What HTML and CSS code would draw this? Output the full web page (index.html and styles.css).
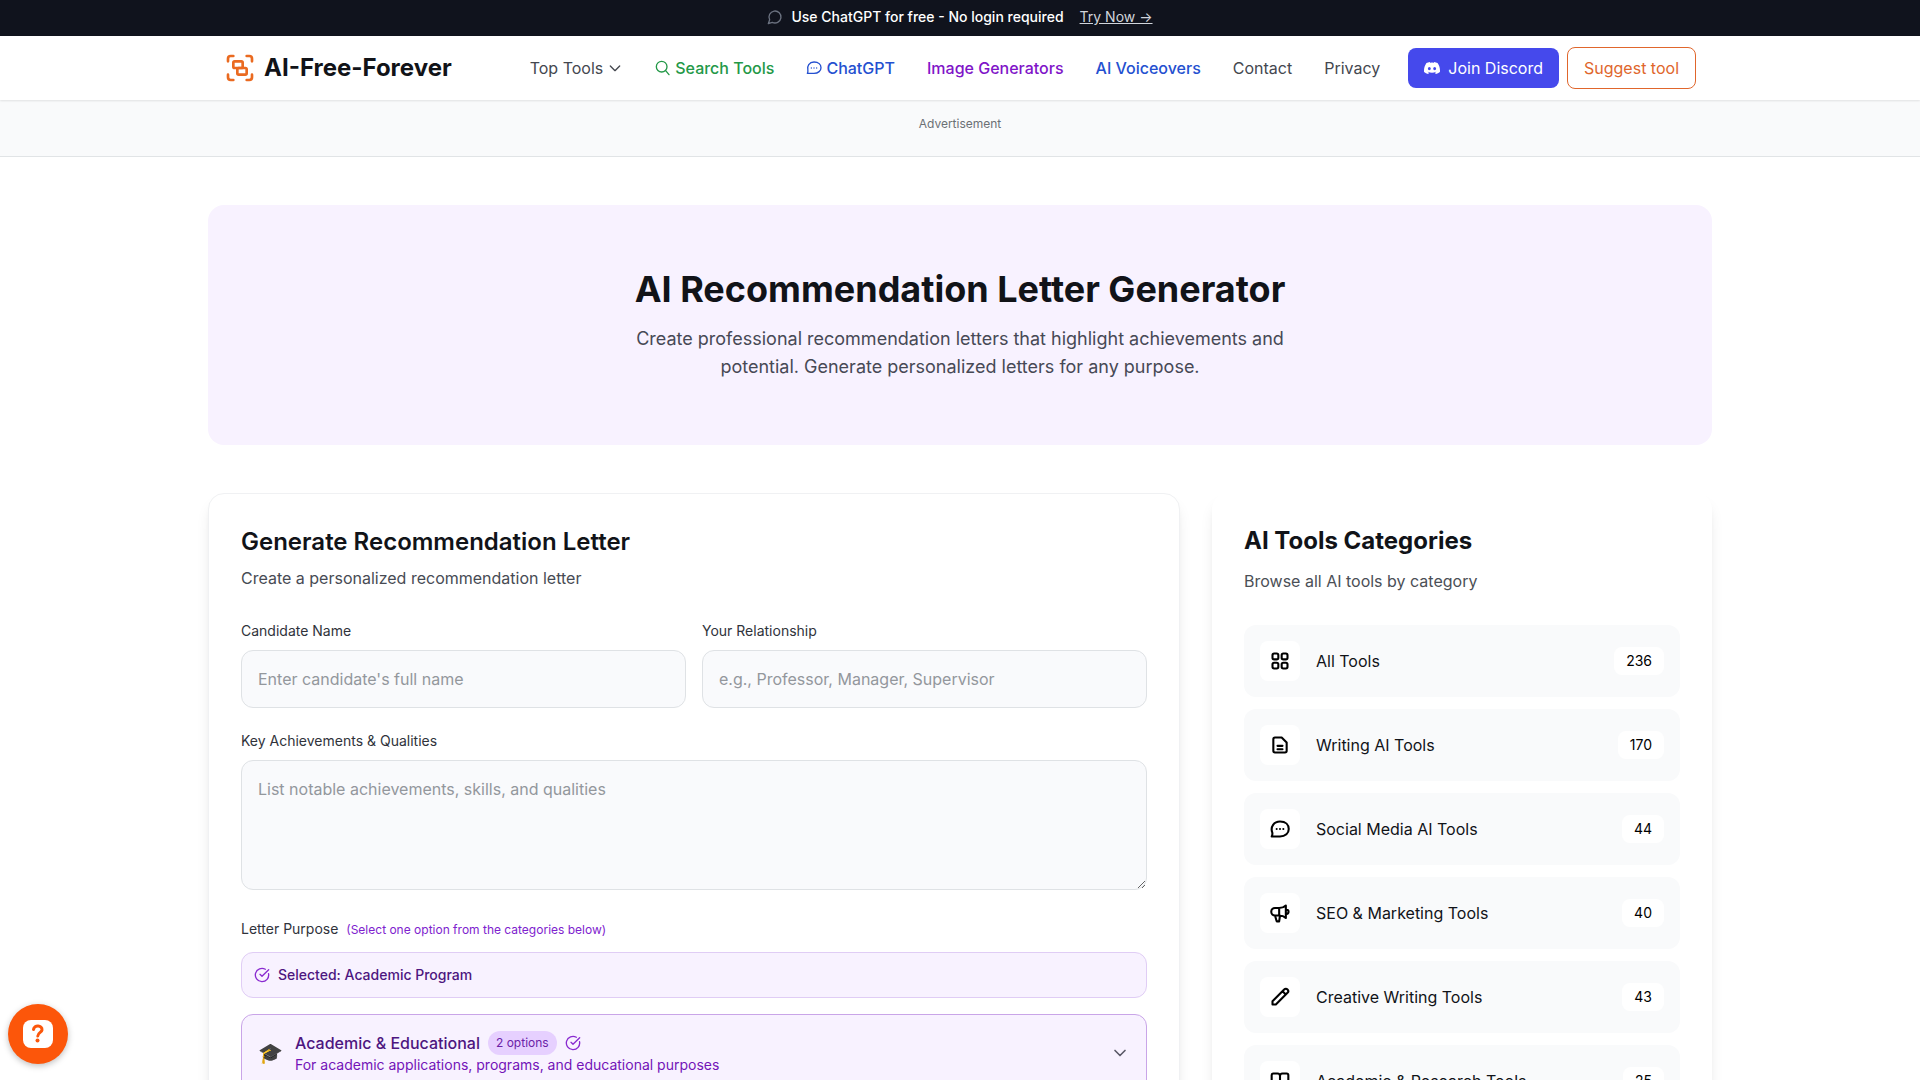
FILE: index.html
```html
<!DOCTYPE html>
<html lang="en">
    <head>
        <meta charset="utf-8">
        <meta name="viewport" content="width=device-width, initial-scale=1">
        <title>AI Recommendation Letter Generator</title>
        <link rel="stylesheet" href="styles.css">
    </head>
    <body>
        <div class="topbar">
            <svg class="icon-sm" viewBox="0 0 24 24"><path d="M7.9 20A9 9 0 1 0 4 16.1L2 22Z"/></svg>
            <span>Use ChatGPT for free - No login required</span>
            <a href="#">Try Now →</a>
        </div>

        <header class="header">
            <div class="header-inner">
                <a class="brand" href="#">
                    <svg viewBox="0 0 24 24">
                        <path d="M3 7V5a2 2 0 0 1 2-2h2M17 3h2a2 2 0 0 1 2 2v2M21 17v2a2 2 0 0 1-2 2h-2M7 21H5a2 2 0 0 1-2-2v-2"/>
                        <rect width="7" height="5" x="7" y="7" rx="1"/>
                        <rect width="7" height="5" x="10" y="12" rx="1"/>
                    </svg>
                    AI-Free-Forever
                </a>
                <nav class="nav">
                    <button class="nav-menu" type="button">Top Tools
                        <svg class="icon-sm" viewBox="0 0 24 24"><path d="m5 9 7 7 7-7"/></svg>
                    </button>
                    <a class="green" href="#">
                        <svg class="icon-sm" viewBox="0 0 24 24"><circle cx="10" cy="10" r="8"/><path d="m21 22-5-6"/></svg>
                        Search Tools
                    </a>
                    <a class="blue" href="#">
                        <svg class="icon-sm" viewBox="0 0 24 24"><path d="M2 20c1-1.500 1-3 .8-4.500C1 9 5 3 12 3s10.500 4 10.500 8.500-4 8.500-10.500 8.500zM8 12h.01M12 12h.01M16 12h.01"/></svg>
                        ChatGPT
                    </a>
                    <a class="purple" href="#">Image Generators</a>
                    <a class="blue" href="#">AI Voiceovers</a>
                    <a href="#">Contact</a>
                    <a href="#">Privacy</a>
                </nav>
                <div class="actions">
                    <a class="btn btn-discord" href="#">
                        <svg viewBox="0 0 24 24"><path d="M20.317 4.37a19.8 19.8 0 0 0-4.885-1.515.07.07 0 0 0-.079.037c-.21.375-.444.864-.608 1.25a18.3 18.3 0 0 0-5.487 0 12.6 12.6 0 0 0-.617-1.25.08.08 0 0 0-.079-.037A19.7 19.7 0 0 0 3.677 4.37C.533 9.046-.32 13.58.099 18.058a.08.08 0 0 0 .031.057 19.9 19.9 0 0 0 5.993 3.03.08.08 0 0 0 .084-.028 14 14 0 0 0 1.226-1.994.08.08 0 0 0-.041-.106 13 13 0 0 1-1.872-.892.08.08 0 0 1-.008-.128l.372-.292a.07.07 0 0 1 .077-.01c3.928 1.793 8.18 1.793 12.062 0a.07.07 0 0 1 .078.01l.373.292a.08.08 0 0 1-.006.127 12.3 12.3 0 0 1-1.873.892.08.08 0 0 0-.041.107c.36.698.772 1.362 1.225 1.993a.08.08 0 0 0 .084.028 19.8 19.8 0 0 0 6.002-3.03.08.08 0 0 0 .032-.054c.5-5.177-.838-9.674-3.549-13.66zM8.02 15.33c-1.183 0-2.157-1.085-2.157-2.419s.956-2.419 2.157-2.419c1.21 0 2.176 1.096 2.157 2.42 0 1.333-.956 2.418-2.157 2.418zm7.975 0c-1.183 0-2.157-1.085-2.157-2.419s.955-2.419 2.157-2.419c1.21 0 2.176 1.096 2.157 2.42 0 1.333-.946 2.418-2.157 2.418z"/></svg>
                        Join Discord
                    </a>
                    <a class="btn btn-outline" href="#">Suggest tool</a>
                </div>
            </div>
        </header>

        <div class="ad">Advertisement</div>

        <main class="page">
            <section class="hero">
                <h1>AI Recommendation Letter Generator</h1>
                <p>Create professional recommendation letters that highlight achievements and potential. Generate personalized letters for any purpose.</p>
            </section>

            <div class="columns">
                <form class="card">
                    <h2>Generate Recommendation Letter</h2>
                    <p class="card-sub">Create a personalized recommendation letter</p>

                    <div class="row">
                        <div class="field">
                            <label for="candidate">Candidate Name</label>
                            <input type="text" id="candidate" name="candidate" placeholder="Enter candidate's full name">
                        </div>
                        <div class="field">
                            <label for="relationship">Your Relationship</label>
                            <input type="text" id="relationship" name="relationship" placeholder="e.g., Professor, Manager, Supervisor">
                        </div>
                    </div>

                    <div class="field">
                        <label for="achievements">Key Achievements &amp; Qualities</label>
                        <textarea id="achievements" name="achievements" rows="4" placeholder="List notable achievements, skills, and qualities"></textarea>
                    </div>

                    <div class="purpose">
                        <p class="purpose-label">Letter Purpose <span>(Select one option from the categories below)</span></p>
                        <div class="selected">
                            <svg class="icon-sm" viewBox="0 0 24 24"><path d="M21.8 10A10 10 0 1 1 17 3.34"/><path d="m9 11 3 3L22 4"/></svg>
                            Selected: Academic Program
                        </div>
                        <button class="group" type="button">
                            <span class="emoji">🎓</span>
                            <span class="group-text">
                                <span class="group-title">
                                    Academic &amp; Educational
                                    <span class="pill">2 options</span>
                                    <svg class="icon-sm" viewBox="0 0 24 24"><path d="M21.8 10A10 10 0 1 1 17 3.34"/><path d="m9 11 3 3L22 4"/></svg>
                                </span>
                                <span class="group-desc">For academic applications, programs, and educational purposes</span>
                            </span>
                            <svg class="chevron" viewBox="0 0 24 24"><path d="m6 9 6 6 6-6"/></svg>
                        </button>
                    </div>
                </form>

                <aside class="sidebar">
                    <h2>AI Tools Categories</h2>
                    <p>Browse all AI tools by category</p>
                    <ul class="categories">
                        <li><a href="#">
                            <span class="tile"><svg viewBox="0 0 24 24"><rect x="3" y="3" width="7" height="7" rx="2"/><rect x="14" y="3" width="7" height="7" rx="2"/><rect x="3" y="14" width="7" height="7" rx="2"/><rect x="14" y="14" width="7" height="7" rx="2"/></svg></span>
                            <span class="name">All Tools</span>
                            <span class="count">236</span>
                        </a></li>
                        <li><a href="#">
                            <span class="tile"><svg viewBox="0 0 24 24"><path d="M14 3H6a2 2 0 0 0-2 2v14a2 2 0 0 0 2 2h12a2 2 0 0 0 2-2V9zM9 13h6M9 17h6"/></svg></span>
                            <span class="name">Writing AI Tools</span>
                            <span class="count">170</span>
                        </a></li>
                        <li><a href="#">
                            <span class="tile"><svg viewBox="0 0 24 24"><path d="M2 21c1-1.500 1-3 .8-4.500C0 9 5 3 12 3s10.500 4 10.500 9-4 9-10.500 9zM8 12h.01M12 12h.01M16 12h.01"/></svg></span>
                            <span class="name">Social Media AI Tools</span>
                            <span class="count">44</span>
                        </a></li>
                        <li><a href="#">
                            <span class="tile"><svg viewBox="0 0 24 24"><path d="M11 6H6a4 4 0 0 0 0 9h5c3 0 6 1 8 3V3c-2 2-5 3-8 3zM11 6v9M6 15l2 7h3l1-7M20 8c3 0 3 5 0 5"/></svg></span>
                            <span class="name">SEO &amp; Marketing Tools</span>
                            <span class="count">40</span>
                        </a></li>
                        <li><a href="#">
                            <span class="tile"><svg viewBox="0 0 24 24"><path d="M3 17 17 3a2.800 2.800 0 0 1 4 4L7 21H3zM15 5l4 4"/></svg></span>
                            <span class="name">Creative Writing Tools</span>
                            <span class="count">43</span>
                        </a></li>
                        <li><a href="#">
                            <span class="tile"><svg viewBox="0 0 24 24"><path d="M12 6c0-2-1-3-3-3H4a2 2 0 0 0-2 2v12a2 2 0 0 0 2 2h5c2 0 3 1 3 2 0-1 1-2 3-2h5a2 2 0 0 0 2-2V5a2 2 0 0 0-2-2h-5c-2 0-3 1-3 3zv15"/></svg></span>
                            <span class="name">Academic &amp; Research Tools</span>
                            <span class="count">25</span>
                        </a></li>
                    </ul>
                </aside>
            </div>
        </main>

        <button class="help" type="button" aria-label="Help">
            <svg viewBox="0 0 30 28">
                <rect width="30" height="28" rx="8"/>
                <path d="M10.500 9.500c.5-5 9-4.500 8.500.5-.3 2.500-4 2.500-4.200 6"/>
                <circle cx="14.500" cy="20.500" r="2"/>
            </svg>
        </button>
    </body>
</html>
```

FILE: styles.css
```css
* {
    box-sizing: border-box;
}
body {
    margin: 0;
    background-color: #fff;
    color: #111318;
    font-family: Inter, "Liberation Sans", sans-serif;
    font-size: 16px;
    line-height: 24px;
}
h1, h2, p, ul {
    margin: 0;
    padding: 0;
}
a {
    color: inherit;
    text-decoration: none;
}
button, input, textarea {
    font: inherit;
}
button {
    cursor: pointer;
}
svg {
    flex: none;
    fill: none;
    stroke: currentColor;
    stroke-width: 2;
    stroke-linecap: round;
    stroke-linejoin: round;
}
.icon-sm {
    width: 16px;
    height: 16px;
}

/* top bar */
.topbar {
    display: flex;
    align-items: center;
    justify-content: center;
    gap: 8px;
    padding: 7px 16px 9px;
    background-color: #10131d;
    color: #fff;
    font-size: 14px;
    font-weight: 500;
    line-height: 20px;
}
.topbar svg {
    color: #6b7280;
}
.topbar a {
    margin-left: 8px;
    color: #d1d5db;
    font-weight: 400;
    text-decoration: underline;
}

/* header */
.header {
    position: relative;
    background-color: #fff;
    box-shadow: 0 1px 2px rgba(0, 0, 0, 0.1);
}
.header-inner {
    display: flex;
    align-items: center;
    max-width: 1536px;
    min-height: 64px;
    margin: 0 auto;
    padding: 0 32px;
}
.brand {
    display: flex;
    align-items: center;
    gap: 8px;
    font-size: 24px;
    font-weight: 700;
    line-height: 32px;
}
.brand svg {
    width: 32px;
    height: 32px;
    color: #ea6a20;
}
.nav {
    display: flex;
    align-items: center;
    gap: 32px;
    margin-left: auto;
    color: #44474f;
}
.nav a, .nav-menu {
    display: flex;
    align-items: center;
    gap: 4px;
}
.nav-menu {
    padding: 0;
    border: 0;
    background: none;
    color: inherit;
}
.nav .green, .nav .blue, .nav .purple {
    font-weight: 500;
}
.nav .green {
    color: #239847;
}
.nav .blue {
    color: #2450d0;
}
.nav .purple {
    color: #8014c8;
}
.actions {
    display: flex;
    align-items: center;
    gap: 8px;
    margin-left: 28px;
}
.btn {
    display: flex;
    align-items: center;
    gap: 8px;
    padding: 8px 16px;
    border-radius: 8px;
}
.btn-discord {
    background-color: #4549ec;
    color: #fff;
}
.btn-discord svg {
    width: 16px;
    height: 16px;
    fill: currentColor;
    stroke: none;
}
.btn-outline {
    border: 1px solid #e0662c;
    color: #e0662c;
}

.ad {
    padding: 16px 0 24px;
    border-bottom: 1px solid #e1e4e6;
    background-color: #f9fafb;
    color: #6b7075;
    font-size: 12px;
    line-height: 16px;
    text-align: center;
}

.page {
    max-width: 1536px;
    margin: 0 auto;
    padding: 48px 16px;
}
.hero {
    padding: 64px 32px;
    border-radius: 16px;
    background-color: #f8f2ff;
    text-align: center;
}
.hero h1 {
    margin-bottom: 16px;
    font-size: 36px;
    font-weight: 700;
    line-height: 40px;
}
.hero p {
    max-width: 672px;
    margin: 0 auto;
    color: #474955;
    font-size: 18px;
    line-height: 28px;
}

.columns {
    display: grid;
    grid-template-columns: minmax(0, 1fr) 500px;
    gap: 32px;
    margin-top: 48px;
}

/* form */
.card, .sidebar {
    padding: 32px;
    border-radius: 16px;
    background-color: #fff;
    box-shadow: 0 10px 15px -3px rgba(0, 0, 0, 0.1), 0 4px 6px -4px rgba(0, 0, 0, 0.1);
}
.card {
    border: 1px solid #f0f1f3;
}
.card h2, .sidebar h2 {
    font-size: 24px;
    line-height: 32px;
}
.card h2 {
    margin-bottom: 8px;
    font-weight: 600;
}
.card-sub {
    margin-bottom: 32px;
    color: #474b54;
}
.row {
    display: grid;
    grid-template-columns: 1fr 1fr;
    gap: 16px;
    margin-bottom: 24px;
}
.field label {
    display: block;
    margin-bottom: 10px;
    color: #30333b;
    font-size: 14px;
    line-height: 18px;
}
.field input, .field textarea {
    display: block;
    width: 100%;
    padding: 16px;
    border: 1px solid #dfe2e5;
    border-radius: 12px;
    background-color: #f9fafc;
}
.field input {
    height: 58px;
}
.field textarea {
    resize: vertical;
}
.field ::placeholder {
    color: #93979c;
}
.purpose {
    margin-top: 30px;
}
.purpose-label {
    margin-bottom: 14px;
    color: #30333b;
    font-size: 14px;
    line-height: 18px;
}
.purpose-label span {
    margin-left: 4px;
    color: #7e22ce;
    font-size: 12px;
    line-height: 16px;
}
.selected {
    display: flex;
    align-items: center;
    gap: 8px;
    margin-bottom: 16px;
    padding: 12px;
    border: 1px solid #e0cdf5;
    border-radius: 12px;
    background-color: #f8f2ff;
    color: #4d1680;
    font-size: 14px;
    font-weight: 500;
    line-height: 20px;
}
.selected svg, .group-title svg {
    color: #8a2bd0;
}
.group {
    display: flex;
    align-items: center;
    gap: 12px;
    width: 100%;
    padding: 16px;
    border: 1px solid #c9a5e8;
    border-radius: 12px;
    background-color: #f8f2ff;
    text-align: left;
}
.emoji {
    font-size: 20px;
}
.group-text {
    flex: 1;
}
.group-title {
    display: flex;
    align-items: center;
    gap: 8px;
    color: #4d1680;
    font-weight: 500;
}
.pill {
    padding: 4px 8px;
    border-radius: 12px;
    background-color: #e6d0ff;
    color: #6b21a8;
    font-size: 12px;
    font-weight: 400;
    line-height: 16px;
}
.group-desc {
    display: block;
    color: #7314b8;
    font-size: 14px;
    line-height: 20px;
}
.chevron {
    width: 20px;
    height: 20px;
    color: #5b5a68;
}

/* categories */
.sidebar h2 {
    margin-bottom: 12px;
    font-weight: 700;
}
.sidebar p {
    margin-bottom: 32px;
    color: #4b4f56;
}
.categories {
    display: grid;
    gap: 12px;
    list-style: none;
}
.categories a {
    display: flex;
    align-items: center;
    gap: 16px;
    padding: 16px;
    border-radius: 12px;
    background-color: #f9fafb;
}
.tile {
    display: flex;
    align-items: center;
    justify-content: center;
    width: 40px;
    height: 40px;
    border-radius: 8px;
    background-color: #fff;
    color: #000;
}
.tile svg {
    width: 20px;
    height: 20px;
    stroke-width: 2.5;
}
.name {
    flex: 1;
}
.count {
    padding: 4px 12px;
    border-radius: 8px;
    background-color: #fff;
    color: #000;
    font-size: 14px;
    line-height: 20px;
}

.help {
    position: fixed;
    bottom: 16px;
    left: 8px;
    display: flex;
    align-items: center;
    justify-content: center;
    width: 60px;
    height: 60px;
    padding: 0;
    border: 0;
    border-radius: 50%;
    background-color: #fc560a;
    box-shadow: 0 2px 6px rgba(0, 0, 0, 0.25);
    color: #fc560a;
}
.help svg {
    width: 30px;
    height: 28px;
    stroke-width: 3;
}
.help rect {
    fill: #fff;
    stroke: none;
}
.help circle {
    fill: currentColor;
    stroke: none;
}
```
